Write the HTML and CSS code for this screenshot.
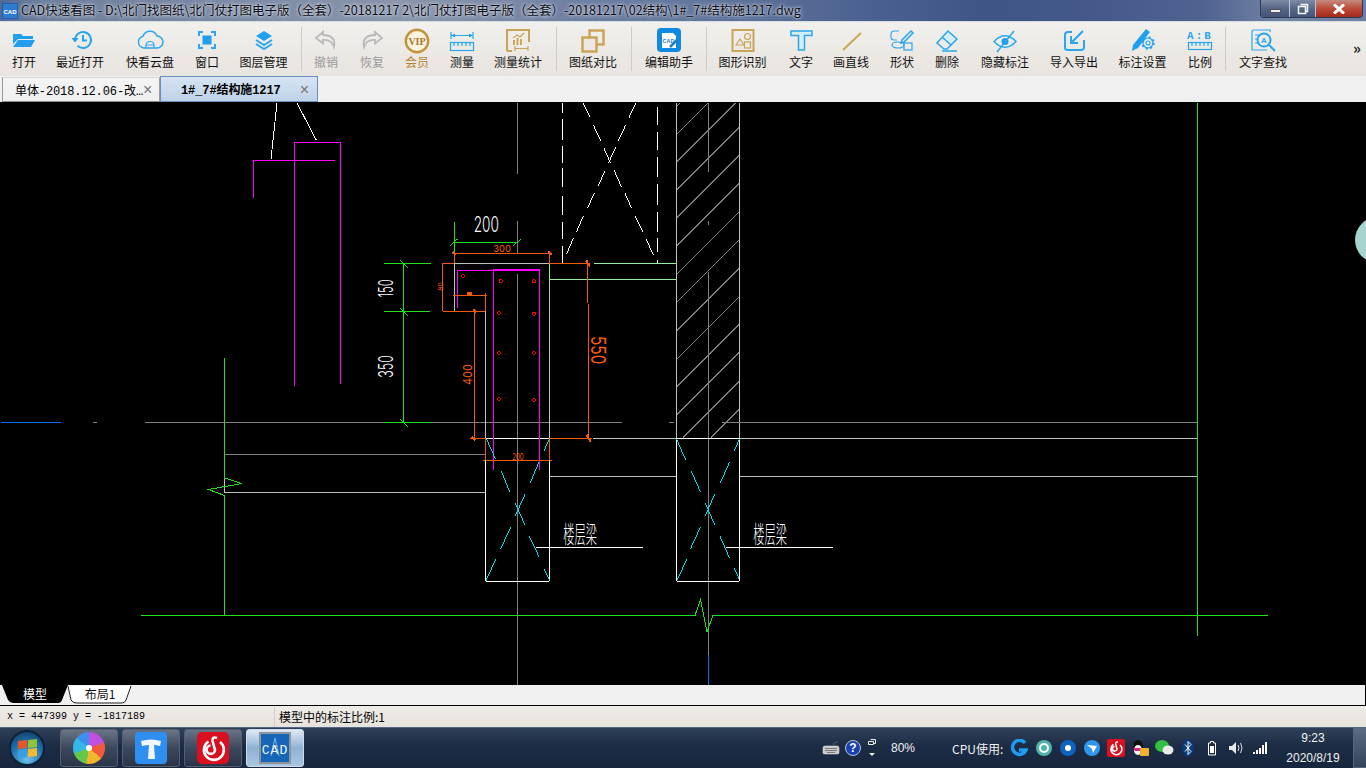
FILE: index.html
```html
<!DOCTYPE html>
<html lang="zh-CN">
<head>
<meta charset="utf-8">
<title>CAD快速看图</title>
<link rel="stylesheet" href="styles.css">
</head>
<body>
<div class="app">
  <header class="titlebar">
    <svg class="appicon" width="16" height="16" viewBox="0 0 16 16"><rect width="16" height="16" fill="#1d5fb0"/><rect x="1" y="1" width="14" height="14" fill="#2f7ccc"/><text x="8" y="11" class="appicon-t">CAD</text></svg>
    <span class="title">CAD快速看图 - D:\北门找图纸\北门仗打图电子版（全套）-20181217 2\北门仗打图电子版（全套）-20181217\02结构\1#_7#结构施1217.dwg</span>
    <div class="winctl">
      <div class="wbtn wmin"><span class="minbar"></span></div>
      <div class="wbtn wres"><svg width="12" height="12" viewBox="0 0 12 12"><path d="M3.5 1.5h7v7h-2M1.5 3.5h7v7h-7z" class="wi"/></svg></div>
      <div class="wbtn wclose"><svg width="14" height="10" viewBox="0 0 14 10"><path d="M2 0.5l10 9M12 0.5l-10 9" class="wx"/></svg></div>
    </div>
  </header>

  <nav class="toolbar">
    <div class="tool"><svg class="ic" viewBox="0 0 28 24"><path class="fb" d="M3 5h8l2 2h10v3H8L3 15z"/><path class="fb" d="M8 11h17l-4 7H3z"/></svg><span>打开</span></div>
    <div class="tool"><svg class="ic" viewBox="0 0 28 24"><path class="sb" d="M9 11a8 8 0 1 1 2.5 5.8"/><path class="fb" d="M5.500 9h7l-3.500 4.500z"/><path class="sb" d="M17 6v5.500h4"/></svg><span>最近打开</span></div>
    <div class="tool"><svg class="ic" viewBox="0 0 28 24"><path class="sb mid" d="M8 19a6 6 0 0 1-1-11.800A7.500 7.500 0 0 1 21 7a6 6 0 0 1 0 12z"/><path class="sb thin" d="M10 19v-3a4 3.500 0 0 1 8 0v3M10 16h8"/></svg><span>快看云盘</span></div>
    <div class="tool"><svg class="ic" viewBox="0 0 28 24"><path class="sb" d="M6 7V3h4M18 3h4v4M22 15v4h-4M10 19H6v-4"/><rect class="fb" x="9.500" y="6.500" width="9" height="9"/></svg><span>窗口</span></div>
    <div class="tool"><svg class="ic" viewBox="0 0 28 24"><path class="fb" d="M14 2l8 5-8 5-8-5z"/><path class="sb" d="M6 11l8 5 8-5M6 15l8 5 8-5"/></svg><span>图层管理</span></div>
    <i class="sep"></i>
    <div class="tool off"><svg class="ic" viewBox="0 0 28 24"><path class="sg" d="M11 3L4 9l7 5.500V11c5-.5 9 1 11 7 2-8-3-12-11-12z"/></svg><span>撤销</span></div>
    <div class="tool off"><svg class="ic" viewBox="0 0 28 24"><path class="sg" d="M17 3l7 6-7 5.500V11c-5-.5-9 1-11 7-2-8 3-12 11-12z"/></svg><span>恢复</span></div>
    <div class="tool vip"><svg class="ic" viewBox="0 0 28 24"><circle class="vipc" cx="14" cy="12" r="11.200"/><text class="vipt" x="14" y="15.500">VIP</text></svg><span>会员</span></div>
    <div class="tool"><svg class="ic" viewBox="0 0 28 24"><path class="sb thin" d="M3 3v7M25 3v7M3 6.500h22"/><path class="fb" d="M3 6.500l4-2v4zM25 6.500l-4-2v4z"/><rect class="sb thin" x="2.500" y="13.500" width="23" height="8"/><path class="sb thin" d="M6 14v3M10 14v3M14 14v3M18 14v3M22 14v3"/></svg><span>测量</span></div>
    <div class="tool pr4"><svg class="ic" viewBox="0 0 28 24"><path class="sy" d="M3 22V1h22v12M3 22h5"/><path class="sy thin" d="M9 9l4-3 3 2 4-4"/><path class="fy" d="M9 11h2v5H9zM12.500 9h2v7h-2zM16 10h2v6h-2z"/><path class="sy thin" d="M11 19.500h13M11 17v5M24 17v5"/></svg><span>测量统计</span></div>
    <i class="sep"></i>
    <div class="tool pr2"><svg class="ic" viewBox="0 0 28 24"><rect class="sy thick" x="10.500" y="1.500" width="14" height="14"/><rect class="sy thick fillbg" x="3.500" y="8.500" width="14" height="14"/></svg><span>图纸对比</span></div>
    <i class="sep"></i>
    <div class="tool"><svg class="ic ov" viewBox="0 0 28 24"><rect class="fb2" x="2" y="-1" width="24" height="24" rx="4"/><path class="fw" d="M7 4h11l3 3v12H7z"/><text class="cadt" x="13.500" y="13.500">CAD</text><path class="sbw" d="M15 18l8-8"/></svg><span>编辑助手</span></div>
    <i class="sep"></i>
    <div class="tool pr2"><svg class="ic" viewBox="0 0 28 24"><rect class="sy" x="3.500" y="1" width="21" height="21"/><path class="sy thin" d="M7 16l4-6 4 6z"/><circle class="sy thin" cx="18.500" cy="7.500" r="3"/><rect class="sy thin" x="15.500" y="13" width="6" height="6"/></svg><span>图形识别</span></div>
    <div class="tool"><svg class="ic" viewBox="0 0 28 24"><path class="tt" d="M4 2h21v4.500h-7.500V21h-6V6.500H4z"/></svg><span>文字</span></div>
    <div class="tool"><svg class="ic" viewBox="0 0 28 24"><path class="sy" d="M6 21L24 4"/></svg><span>画直线</span></div>
    <div class="tool"><svg class="ic" viewBox="0 0 28 24"><path class="sb thin" d="M11 2H6.500Q3 2 3 5.500V8q0 3 3.500 3H9"/><path class="sb mid" d="M23 2l2 2-9 9-3 1 1-3z"/><ellipse class="sb thin" cx="10" cy="16" rx="6" ry="3"/><rect class="sb thin" x="16" y="14" width="8" height="7"/></svg><span>形状</span></div>
    <div class="tool"><svg class="ic" viewBox="0 0 28 24"><path class="hatch" d="M15 2l9 8-6 6-9-8z"/><path class="sb mid" d="M15 2l9 8-10 10h-3l-7-6zM9 8l9 8"/><path class="sb mid" d="M9 22h15"/></svg><span>删除</span></div>
    <div class="tool"><svg class="ic" viewBox="0 0 28 24"><path class="sb mid" d="M3 12.500Q14 1 25 12.500 14 24 3 12.500z"/><circle class="fb" cx="14" cy="12.500" r="3.500"/><path class="sb mid" d="M23 2L6 23"/></svg><span>隐藏标注</span></div>
    <div class="tool"><svg class="ic" viewBox="0 0 28 24"><path class="sb" d="M12 3H8Q5 3 5 6v13q0 2 3 2h13q3 0 3-3v-7"/><path class="sb" d="M23 2L12 13M11 7v7h7"/></svg><span>导入导出</span></div>
    <div class="tool"><svg class="ic" viewBox="0 0 28 24"><path class="fb" d="M17 0l4 3L9 19l-6 3 1-6z"/><circle class="gear" cx="19" cy="14" r="5.500"/><circle class="sb thin" cx="19" cy="14" r="5"/><circle class="sb thin" cx="19" cy="14" r="2"/></svg><span>标注设置</span></div>
    <div class="tool pr2"><svg class="ic" viewBox="0 0 28 24"><text class="abt" x="14" y="9.500">A:B</text><rect class="sb thin" x="2.500" y="13.500" width="23" height="7"/><path class="sb thin" d="M6 14v3M10 14v3M14 14v3M18 14v3M22 14v3"/></svg><span>比例</span></div>
    <i class="sep"></i>
    <div class="tool"><svg class="ic" viewBox="0 0 28 24"><path class="sb thin" d="M21 3V1H5q-2 0-2 2v18h15"/><path class="sb thin" d="M6 6h4M6 10h3M6 14h3"/><circle class="sb" cx="15" cy="11" r="6.500"/><text class="findt" x="15" y="14">A</text><path class="sb" d="M20 16l6 6"/></svg><span>文字查找</span></div>
    <div class="more">»</div>
  </nav>

  <div class="tabs">
    <div class="tab"><span class="tabt">单体-2018.12.06-改…</span><span class="tabx">×</span></div>
    <div class="tab active"><span class="tabt">1#_7#结构施1217</span><span class="tabx">×</span></div>
  </div>

  <main class="canvas">
    <svg class="drawing" width="1366" height="583" viewBox="0 102 1366 583">
      <!-- wall hatch -->
      <path class="l-mid" d="M676 107.300l4 -4M676 135l32 -32M676 162.700l59.500 -59.500M676 190.700l63 -63M676 218.700l63 -63M676 246.700l63 -63M676 275l63 -63M676 303.300l63 -63M676 331.700l63 -63M676 360l63 -63M676 387.700l63 -63M676 415.700l63 -63M682.700 437.700l56.500 -56.500M710.700 437.700l28.500 -28.500"/>
      <path class="l-light" d="M676.500 103V438M739.500 103V438"/>
      <path class="l-mid" d="M708.500 103V172M708.500 221V225M708.500 272V655M517.500 103V174M517.500 221V253M517.500 274V685"/>
      <path class="l-blue" d="M708.500 655V685M1 422.500H61"/>
      <path class="l-mid" d="M93 422.500h4M145 422.500H622M669 422.500h5M722 422.500H1197"/>
      <path class="l-mid" d="M224.500 454.500H485"/>
      <path class="l-light" d="M224.500 454.500V492.500H485M593 438.500H676M739 438.500H1197M550 476.500H676M739 476.500H1197"/>

      <!-- top left -->
      <path class="l-white" d="M277 103L271 159M297 103L316.500 140.500"/>
      <path class="l-mag" d="M294.500 386V142.500H340.500V384M253.500 198V160.500H335"/>
      <path class="l-green" d="M224.500 358V478L242 483.500 208.500 489.500 224.500 495.500V615M141 615.500H695L700.500 599.500 707 631.500 713 615.500H1268M1197.500 103V636"/>

      <!-- upper beam -->
      <g transform="translate(540 100) scale(.33333)" class="w3">
        <path class="l-white" d="M67 10V38M67 58V120M67 138V188M67 205V262M67 288V345M67 365V418M67 438V490M352 22V75M352 95V150M352 170V232M352 252V315M352 335V395M352 415V455M352 480V490"/>
        <path class="l-white" d="M130 10L150 52M160 75L182 122M192 145L212 190M222 210L245 262M255 280L275 325M285 348L308 395M318 418L341 465"/>
        <path class="l-white" d="M287 10L266 55M257 75L235 122M227 142L205 190M195 212L175 257M163 280L142 325M130 348L110 395M100 415L79 463"/>
        <path class="l-pale" d="M162 490H409M28 490V538H409"/>
      </g>

      <!-- section detail -->
      <g transform="translate(370 210) scale(.33333)" class="w3">
        <path class="l-green" d="M100 160V637M42 160H183M42 304H180M42 637H183M253 37V130M253 97H442"/>
        <path class="l-green" d="M90 150L113 173M90 294L113 317M90 627L113 650M240 107L265 85M430 107L453 87"/>
        <path class="l-light" d="M253 160H538M253 160V304H300M538 208V685M346 304V685"/>
        <path class="l-white" d="M346 685H538"/>
        <path class="l-mag" d="M262 293V181H370M370 780V179H510V780"/>
        <path class="l-mag w6" d="M370 179H510"/>
        <path class="l-orange" d="M245 130H545M253 130V160M538 130V160M215 160H253M538 160H660M218 160V304H345M250 256H350M346 250V304M313 304V685M652 150V280M656 283V685M300 685H346M538 685H665M340 751H545M346 685V751M538 685V751"/>
        <path class="l-orange w6" d="M248 125L258 135M535 125L545 135M309 298L319 308M648 152L660 170M650 675L662 695M306 680L316 690"/>
        <rect class="f-orange" x="292" y="246" width="13" height="10"/>
        <g class="l-red">
          <circle cx="279" cy="198" r="5"/><circle cx="392" cy="213" r="5"/><circle cx="492" cy="214" r="5"/>
          <circle cx="387" cy="309" r="5"/><circle cx="492" cy="311" r="5"/><circle cx="387" cy="429" r="5"/>
          <circle cx="492" cy="429" r="5"/><circle cx="387" cy="567" r="5"/><circle cx="492" cy="570" r="5"/>
        </g>
        <text class="t-white" font-size="66" transform="translate(311 65) scale(.62 1)">200</text>
        <text class="t-white" font-size="60" transform="translate(68 262) rotate(-90) scale(.56 1)">150</text>
        <text class="t-white" font-size="62" transform="translate(70 503) rotate(-90) scale(.6 1)">350</text>
        <text class="t-orange" font-size="28" transform="translate(370 125)">300</text>
        <text class="t-orange" font-size="20" transform="translate(219 242) rotate(-90)">80</text>
        <text class="t-orange" font-size="37" transform="translate(305 525) rotate(-90) scale(.89 1)">400</text>
        <text class="t-orange" font-size="60" transform="translate(662 378) rotate(90) scale(.77 1)">550</text>
      </g>

      <!-- beams -->
      <g transform="translate(470 430) scale(.33333)" class="w3">
        <path class="l-white" d="M47 91V454H238V91"/>
        <path class="l-white" d="M620 25V454H808V25M620 25H808"/>
        <path class="l-cyan" d="M50 28L77 88M94 124L119 185M136 220L165 285M178 319L208 382M222 418L238 450M238 28L222 62M207 96L181 158M165 193L136 257M122 292L92 356M77 388L48 452"/>
        <path class="l-cyan" d="M620 28L647 90M664 124L691 185M706 220L734 284M750 319L778 383M793 415L808 448M808 28L793 63M779 96L751 158M734 193L706 257M691 292L661 357M650 388L622 450"/>
        <path class="l-white" d="M198 352H518M768 352H1088"/>
        <text class="t-orange" font-size="25" transform="translate(127 90) scale(.72 1)">200</text>
        <text class="t-cjk" font-size="70" transform="translate(280 340) scale(.48 1)">楼层梁</text>
        <text class="t-cjk" font-size="70" transform="translate(850 340) scale(.48 1)">楼层梁</text>
      </g>

      <circle class="bubble" cx="1378" cy="240" r="23"/>
    </svg>
  </main>

  <div class="layouts">
    <svg width="140" height="20" viewBox="0 0 140 20">
      <path class="ltab-b" d="M2 0L8 15Q10 18 13 18H58Q61 18 62 15L68 0z"/>
      <path class="ltab-w" d="M68 1L71 15Q73 18 76 18H122Q125 18 126 15L131 1"/>
      <text class="ltt-w" x="35" y="14">模型</text>
      <text class="ltt-b" x="100" y="14">布局1</text>
    </svg>
  </div>

  <div class="status">
    <div class="coords">x = 447399 y = -1817189</div>
    <div class="scale">模型中的标注比例:1</div>
  </div>

  <footer class="taskbar">
    <div class="start">
      <div class="orb"><div class="flag"><i class="p1"></i><i class="p2"></i><i class="p3"></i><i class="p4"></i></div></div>
    </div>
    <div class="task"><div class="pinwheel"><i></i></div></div>
    <div class="task"><svg width="32" height="32" viewBox="0 0 32 32"><rect width="32" height="32" rx="4" class="tk-t"/><path class="tk-tw" d="M6 9q10-3 20 0l-1 5q-4-1-6-1l1 14h-7l1-14q-3 0-7 1z"/></svg></div>
    <div class="task"><svg width="32" height="32" viewBox="0 0 32 32"><rect width="32" height="32" rx="5" class="tk-n"/><path class="tk-ns" d="M20 6Q15 4 15.500 9L18 18A4.200 4.200 0 1 1 13.500 13.500M11.500 9.500A10 10 0 1 0 23 10"/></svg></div>
    <div class="task task-on"><svg width="32" height="32" viewBox="0 0 32 32"><rect width="32" height="32" class="tk-cf"/><rect x="2" y="2" width="28" height="28" class="tk-cb"/><path class="tk-tower" d="M16 6L12 24M16 6l4 18M13 14h6"/><text class="tk-ct" x="16" y="22">CAD</text></svg></div>

    <div class="tray">
      <div class="ti"><svg width="18" height="14" viewBox="0 0 18 14"><path class="kb" d="M1 7q0-2 2-2h12q2 0 2 2v5q0 1-2 1H3q-2 0-2-1z"/><path class="kbl" d="M3 7.500h12M3 9.500h12M5 11.500h8M11 5q0-4 5-4"/></svg></div>
      <div class="ti"><svg width="16" height="16" viewBox="0 0 16 16"><circle cx="8" cy="8" r="7.500" class="hp"/><text class="hpt" x="8" y="12">?</text></svg></div>
      <div class="ti"><svg width="10" height="20" viewBox="0 0 10 20"><path class="up" d="M3.500 1.500h5v4h-2M1.500 3.500h5v3h-5z"/><path class="upf" d="M2 15h6l-3 3z"/></svg></div>
      <div class="pct">80%</div>
      <div class="cpu">CPU使用:</div>
      <div class="ti"><svg width="18" height="18" viewBox="0 0 18 18"><path class="g1" d="M15 4a7 7 0 1 0 1 7H9"/></svg></div>
      <div class="ti"><svg width="18" height="18" viewBox="0 0 18 18"><circle cx="9" cy="9" r="8" class="q1"/><circle cx="9" cy="9" r="4" class="q2"/></svg></div>
      <div class="ti"><svg width="18" height="18" viewBox="0 0 18 18"><circle cx="9" cy="9" r="8" class="s1"/><circle cx="9" cy="9" r="3" class="s2"/></svg></div>
      <div class="ti"><svg width="18" height="18" viewBox="0 0 18 18"><circle cx="9" cy="9" r="8" class="d1"/><path class="d2" d="M4 6l10 1-4 7-1-4z"/></svg></div>
      <div class="ti"><svg width="18" height="18" viewBox="0 0 18 18"><rect width="18" height="18" rx="2" class="tk-n"/><path class="tk-ns thin2" d="M11 3Q8.500 2.500 8.700 5L10 10A2.300 2.300 0 1 1 7.500 7.500M6.500 5.500A5.500 5.500 0 1 0 13 6"/></svg></div>
      <div class="ti"><svg width="20" height="20" viewBox="0 0 20 20"><ellipse cx="8" cy="8" rx="5" ry="6" class="qq-k"/><ellipse cx="8" cy="12" rx="4" ry="5" class="qq-w"/><path class="qq-m" d="M3 10h10l-2 3H5z"/><rect x="10" y="10" width="9" height="8" rx="1" class="qq-y"/></svg></div>
      <div class="ti"><svg width="20" height="18" viewBox="0 0 20 18"><ellipse cx="8" cy="7" rx="7" ry="6" class="wc1"/><ellipse cx="14" cy="11" rx="5.500" ry="4.500" class="wc2"/></svg></div>
      <div class="ti"><svg width="12" height="18" viewBox="0 0 12 18"><ellipse cx="6" cy="9" rx="6" ry="9" class="bt1"/><path class="bt2" d="M3 5.500l6 7-3 3v-13l3 3-6 7"/></svg></div>
      <div class="ti"><svg width="10" height="16" viewBox="0 0 10 16"><path class="bat" d="M3.500 1.500h3v1.500h2v12h-7v-12h2z"/><rect x="3" y="6" width="4" height="7" class="batf"/></svg></div>
      <div class="ti"><svg width="16" height="14" viewBox="0 0 16 14"><path class="spk" d="M1 5h3l4-4v12L4 9H1z"/><path class="spw" d="M10 4q2 3 0 6M12.500 2q3 5 0 10"/></svg></div>
      <div class="ti"><svg width="14" height="12" viewBox="0 0 14 12"><path class="sig" d="M0 10h2v2H0zM3 8h2v4H3zM6 6h2v6H6zM9 3h2v9H9zM12 0h2v12h-2z"/></svg></div>
      <div class="clock"><div>9:23</div><div>2020/8/19</div></div>
      <div class="showdesk"></div>
    </div>
  </footer>
</div>
</body>
</html>
```

FILE: styles.css
```css
*{box-sizing:border-box}
html,body{margin:0;padding:0;height:768px;overflow:hidden;background:#000}
body{font-family:"Noto Sans CJK SC","Liberation Sans",sans-serif;font-size:12px;color:#000}
.app{display:flex;flex-direction:column;width:1366px;height:768px}

/* title bar */
.titlebar{height:22px;display:flex;align-items:flex-start;padding-left:2px;border-bottom:1px solid #d8dde4;
  background:linear-gradient(90deg,#4f6a98 0,#6f7f9c 3%,#7d8ba5 18%,#8a95aa 30%,#6f80a2 42%,#5d7199 55%,#4a6090 64%,#3e5585 72%,#44598a 80%,#4f6391 88%,#7384a4 94%,#6f7f9f 100%);
  flex:none;position:relative}
.appicon{margin-top:3px;flex:none}
.appicon-t{font:bold 6px "Liberation Sans",sans-serif;fill:#fff;text-anchor:middle}
.title{margin-left:3px;font-size:12.5px;line-height:20px;white-space:nowrap;color:#0a0a12;text-shadow:0 0 4px #dfe6f0,0 0 2px #dfe6f0}
.winctl{position:absolute;right:3px;top:0;width:103px;height:18px;display:flex;border:1px solid #2a3a55;border-top:0;border-radius:0 0 4px 4px;overflow:hidden}
.wbtn{display:flex;align-items:center;justify-content:center;height:17px}
.wmin{width:29px;background:linear-gradient(#7f8ba4,#566785 50%,#43547a);border-right:1px solid #b8c2d0;align-items:flex-end;padding-bottom:4px}
.minbar{width:11px;height:4px;background:#f0f0f0;border:1px solid #555}
.wres{width:26px;background:linear-gradient(#7f8ba4,#566785 50%,#43547a);border-right:1px solid #b8c2d0}
.wi{fill:none;stroke:#f5f5f5;stroke-width:1.5}
.wclose{flex:1;background:linear-gradient(#c48a80,#bb4c3a 50%,#a6281a)}
.wx{stroke:#fff;stroke-width:3;fill:none}

/* toolbar */
.toolbar{height:54px;flex:none;display:grid;align-items:start;
  grid-template-columns:48px 64px 76px 38px 75px 1px 48px 44px 46px 44px 72px 1px 74px 1px 74px 1px 73px 42px 58px 44px 46px 70px 68px 69px 48px 1px 74px 1fr;
  background:linear-gradient(#f1f0ed,#e8e4df)}
.tool{display:flex;flex-direction:column;align-items:center;padding-top:7px;white-space:nowrap}
.pr4{padding-right:4px}
.pr2{padding-right:2px}
.tool span{display:block;line-height:16px;margin-top:1px;color:#111}
.off span{color:#9a9a9a}
.vip span{color:#b5852f}
.ic{width:28px;height:24px;display:block;overflow:visible}
.sep{display:block;width:1px;height:44px;margin-top:5px;background:#cfccc8}
.more{justify-self:end;padding:16px 5px 0 0;font-size:15px;font-weight:bold;line-height:20px;color:#222}
.fb{fill:#1f9fec}
.fb2{fill:#0f8ae0}
.fw{fill:#fff}
.fy{fill:#c9a85c}
.sb,.sg,.sy,.sbw{fill:none;stroke-width:2}
.sb{stroke:#2aa6ec}
.sg{stroke:#b9b9b9;stroke-width:1.800}
.sy{stroke:#c9a558}
.sbw{stroke:#1f7fd0;stroke-width:2.500}
.mid{stroke-width:1.500}
.thin{stroke-width:1.200}
.thick{stroke-width:2.500}
.fillbg{fill:#ece9e5}
.tt{fill:#d5eefb;stroke:#2aa6ec;stroke-width:1.500}
.hatch{fill:#d5eefb}
.gear{fill:none;stroke:#2aa6ec;stroke-width:2.500;stroke-dasharray:2 2.300}
.vipc{fill:#fbf3df;stroke:#c1943c;stroke-width:2.400}
.vipt{font:bold 10px "Liberation Serif",serif;fill:#a5782a;text-anchor:middle}
.cadt{font:bold 5.500px "Liberation Sans",sans-serif;fill:#1f7fd0;text-anchor:middle}
.abt{font:bold 11px "Liberation Mono",monospace;fill:#2aa6ec;text-anchor:middle;letter-spacing:2px}
.findt{font:bold 8px "Liberation Sans",sans-serif;fill:#2aa6ec;text-anchor:middle}

/* tabs */
.tabs{height:26px;flex:none;display:flex;padding:0 0 0 2px;background:#f0f0f0;align-items:flex-start}
.tab{width:158px;height:25px;margin-top:1px;display:flex;align-items:center;justify-content:space-between;padding:0 8px 0 12px;
  background:linear-gradient(#f4f4f4,#efefef);border:1px solid #9a9a9a;border-bottom-color:#8a8a8a;border-top-color:#d9d9d9}
.tabt{font-family:"Liberation Mono","Noto Sans CJK SC",monospace;font-size:12px;white-space:nowrap;letter-spacing:-.1px}
.tabx{font-family:"Liberation Sans",sans-serif;font-size:16px;line-height:17px;color:#777}
.active{margin-top:0;height:26px;background:linear-gradient(#d6e4f3,#bfd2e8);border:1px solid #6d8fc0;padding:0 8px 0 20px}
.active .tabt{font-weight:bold}

/* canvas */
.canvas{height:583px;flex:none;background:#000;overflow:hidden}
.drawing{display:block;shape-rendering:crispEdges;fill:none}
.drawing path{fill:none;stroke-width:1}
.w3 path{stroke-width:3}
.drawing .w6{stroke-width:6}
.l-mid{stroke:#808080}
.l-light{stroke:#c0c0c0}
.l-white{stroke:#fff}
.l-blue{stroke:#0070f0}
.l-mag{stroke:#ff00ff}
.l-green{stroke:#1fe01f}
.l-pale{stroke:#98ee98}
.l-orange{stroke:#f05a0a}
.f-orange{fill:#f05a0a}
.l-red circle{fill:none;stroke:#ff0000;stroke-width:3}
.l-cyan{stroke:#00e0f0}
.bubble{fill:#a8d4d0;shape-rendering:auto}
text{shape-rendering:auto}
.t-white,.t-orange{font-family:Inter,"Liberation Sans",sans-serif}
.t-white{fill:#fff;font-weight:300}
.t-orange{fill:#ff5f0a;font-weight:400}
.t-cjk{font-family:"Noto Sans CJK SC",sans-serif;font-weight:300;fill:#fff}

/* layout tabs */
.layouts{height:21px;flex:none;background:#f0f0f0;border-bottom:1px solid #000;border-right:1px solid #000}
.layouts svg{display:block;overflow:visible}
.ltab-b{fill:#000}
.ltab-w{fill:#fff;stroke:#222}
.ltt-w,.ltt-b{font-size:12px;text-anchor:middle}
.ltt-w{fill:#fff}
.ltt-b{fill:#111}

/* status */
.status{height:21px;flex:none;display:flex;align-items:center;background:linear-gradient(#efece8,#e6e2dd)}
.coords{width:275px;height:21px;padding-left:7px;font:10px/21px "Liberation Mono",monospace;border-right:1px solid #d4d0cb}
.scale{padding-left:4px;font-size:12px;font-family:"Noto Sans CJK SC","Liberation Mono",sans-serif}

/* taskbar */
.taskbar{height:41px;flex:none;display:flex;align-items:stretch;border-top:1px solid #56667e;
  background:linear-gradient(#2e4058,#1c2c44 45%,#17263d)}
.start{width:60px;display:flex;align-items:center;justify-content:center;padding-right:6px}
.orb{width:36px;height:36px;border-radius:50%;background:radial-gradient(circle at 50% 85%,#6cc0e8,#1f6da8 55%,#0c2f55 100%);border:2px solid #0c2238;display:flex;align-items:center;justify-content:center}
.flag{display:grid;grid-template-columns:9px 9px;grid-template-rows:8px 8px;gap:1px;transform:skewY(-6deg)}
.flag i{display:block}
.p1{background:#e8572a}.p2{background:#8fc33a}.p3{background:#3a9fe0}.p4{background:#f4b92d}
.task{width:58px;margin-right:4px;margin-top:1px;margin-bottom:1px;display:flex;align-items:center;justify-content:center;border:1px solid #55606f;border-radius:3px;
  background:linear-gradient(#6a7486,#3c485c 50%,#2a3548)}
.task-on{background:linear-gradient(#dfe9f4,#8fb2d4 50%,#a9c6e0);border-color:#cfdcec}
.pinwheel{width:32px;height:32px;border-radius:50%;display:flex;align-items:center;justify-content:center;
  background:conic-gradient(#c14fe0 0 70deg,#f25a3a 70deg 130deg,#f5b62e 130deg 190deg,#63c84a 190deg 250deg,#35b7e8 250deg 310deg,#3f8ff0 310deg 360deg)}
.pinwheel i{display:block;width:6px;height:6px;border-radius:50%;background:#fff}
.tk-t{fill:#2f8ff0}
.tk-tw{fill:#f2f7fc}
.tk-n{fill:#d9101f}
.tk-ns{fill:none;stroke:#fff;stroke-width:2.600}
.thin2{stroke-width:1.500}
.tk-cf{fill:#8d949c}
.tk-cb{fill:#1666b8}
.tk-tower{fill:none;stroke:#7fb4e4;stroke-width:1}
.tk-ct{font:13px "Liberation Mono",monospace;fill:#eef5fc;text-anchor:middle;letter-spacing:1px}
.tray{margin-left:auto;display:grid;align-items:center;
  grid-template-columns:22px 22px 16px 72px 55px 24px 26px 22px 25px 24px 24px 24px 24px 24px 23px 26px 80px 13px}
.ti{display:flex;align-items:center;justify-content:center}
.pct{padding-left:11px;color:#f2f2f2;font:12px "Liberation Sans",sans-serif}
.cpu{color:#f2f2f2;white-space:nowrap;font-size:12px}
.clock{text-align:center;color:#f2f2f2;font-size:12px;line-height:20px;font-family:"Liberation Sans",sans-serif}
.showdesk{height:40px;border:1px solid #56667e;border-right:0;background:linear-gradient(#5a6a80,#34445a)}
.kb{fill:#c8c8c8;stroke:#eee;stroke-width:.5}
.kbl{fill:none;stroke:#666;stroke-width:.8}
.hp{fill:#1b3fb0;stroke:#b9c6da}
.hpt{font:bold 12px "Liberation Sans",sans-serif;fill:#fff;text-anchor:middle}
.up{fill:none;stroke:#eee}
.upf{fill:#eee}
.g1{fill:none;stroke:#1e9cf0;stroke-width:3.500}
.q1{fill:#4fb5ac}.q2{fill:none;stroke:#fff;stroke-width:2}
.s1{fill:#0d62c4}.s2{fill:#fff}
.d1{fill:#2f96ee}.d2{fill:#fff}
.qq-k{fill:#111}.qq-w{fill:#f5f5f5}.qq-m{fill:#e0208a}.qq-y{fill:#f0b030}
.wc1{fill:#2fc13f}.wc2{fill:#e9e9e9}
.bt1{fill:#0b3a7a}.bt2{fill:none;stroke:#fff}
.bat{fill:none;stroke:#fff}.batf{fill:#fff}
.spk{fill:#e8e8e8}.spw{fill:none;stroke:#ddd}
.sig{fill:#fff}
```
